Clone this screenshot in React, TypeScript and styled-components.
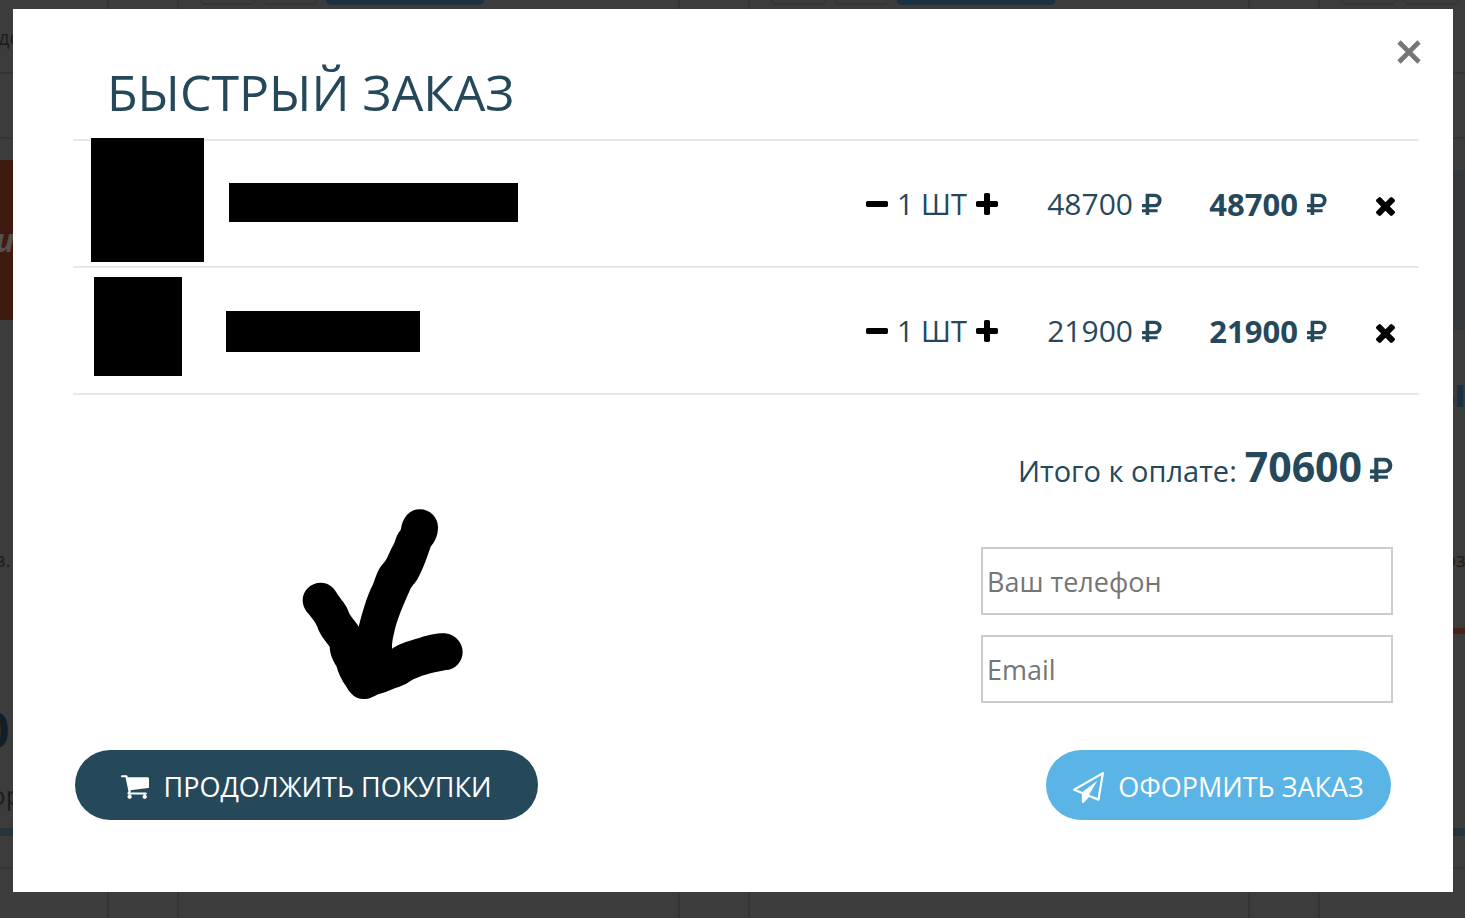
import React from 'react';
import styled, { createGlobalStyle } from 'styled-components';

const GlobalStyle = createGlobalStyle`
  * { box-sizing: border-box; }
  body { margin: 0; background: #3c3c3c; font-family: "Open Sans", "Noto Sans", sans-serif; color: #25485b; }
  button, input { font-family: inherit; }
`;

/* ---------- dimmed catalogue page behind the dialog ---------- */

const Catalogue = styled.div`
  position: fixed;
  inset: 0;
  display: grid;
  grid-template-columns: 109px 1fr 1fr 147px;
  column-gap: 68px;
  overflow: hidden;
  background: #3c3c3c;
`;

const Card = styled.div<{ $side?: 'first' | 'last' }>`
  border: solid #343434;
  border-width: ${p => (p.$side === 'first' ? '0 2px 0 0' : p.$side === 'last' ? '0 0 0 2px' : '0 2px')};
  min-width: 0;
`;

const CardControls = styled.div`
  display: flex;
  gap: 8px;
  height: 5px;
  padding-left: 21px;
`;

const GhostPill = styled.span`
  flex: none;
  width: 55px;
  border: solid #343434;
  border-width: 0 1px 2px;
  border-radius: 0 0 14px 14px;
`;

const BluePill = styled.span`
  flex: none;
  width: 158px;
  border-radius: 0 0 8px 8px;
  background: #1b3040;
`;

const Edge = styled.div<{ $indent?: number }>`
  display: flex;
  flex-direction: column;
  padding-left: ${p => p.$indent || 0}px;
  white-space: nowrap;
`;

const EdgeCell = styled.div<{ $height: number; $bg?: string; $line?: string }>`
  display: flex;
  align-items: center;
  flex: none;
  height: ${p => p.$height}px;
  background: ${p => p.$bg || 'transparent'};
  border-bottom: ${p => (p.$line ? `2px solid ${p.$line}` : 'none')};
`;

const EdgeText = styled.span<{ $size: number; $color?: string; $bold?: boolean; $italic?: boolean; $shift?: number }>`
  margin-left: ${p => p.$shift || 0}px;
  font-size: ${p => p.$size}px;
  line-height: 1;
  font-weight: ${p => (p.$bold ? 700 : 400)};
  font-style: ${p => (p.$italic ? 'italic' : 'normal')};
  color: ${p => p.$color || '#1c1c1c'};
`;

/* ---------- dialog ---------- */

const Overlay = styled.div`
  position: relative;
  padding: 9px 12px 26px 13px;
`;

const Dialog = styled.section`
  position: relative;
  padding: 53px 34px 72px 60px;
  background: #fff;
`;

const Title = styled.h1`
  margin: 0 0 17px 34px;
  font-size: 50px;
  line-height: 60px;
  font-weight: 400;
`;

const IconButton = styled.button`
  display: inline-flex;
  padding: 0;
  border: 0;
  background: none;
  color: #000;
  cursor: pointer;
`;

const CloseButton = styled(IconButton)`
  position: absolute;
  top: 31px;
  right: 32px;
  color: #757575;
`;

const RemoveButton = styled(IconButton)`
  padding-top: 5px;
`;

const Items = styled.table`
  width: 100%;
  border-spacing: 0;
  border-top: 2px solid #e8e8e8;
  table-layout: fixed;
`;

const Cell = styled.td<{ $width?: number; $bold?: boolean; $end?: number }>`
  width: ${p => (p.$width ? `${p.$width}px` : 'auto')};
  height: 127px;
  padding: 0 ${p => p.$end || 0}px 0 0;
  border-bottom: 2px solid #e8e8e8;
  text-align: right;
  font-size: ${p => (p.$bold ? 31 : 30)}px;
  line-height: 40px;
  font-weight: ${p => (p.$bold ? 700 : 400)};
  white-space: nowrap;
`;

const Product = styled.div`
  display: flex;
  align-items: flex-start;
  height: 125px;
`;

const Block = styled.div<{ $w: number; $h: number; $top: number; $left: number }>`
  flex: none;
  width: ${p => p.$w}px;
  height: ${p => p.$h}px;
  margin: ${p => p.$top}px 0 0 ${p => p.$left}px;
  background: #000;
`;

const Inline = styled.div`
  display: flex;
  align-items: center;
  justify-content: flex-end;
  gap: 9px;
`;

const Qty = styled.span`
  font-size: 29px;
`;

const Checkout = styled.div`
  display: flex;
  justify-content: space-between;
  align-items: flex-start;
  padding-right: 26px;
`;

const Arrow = styled.svg`
  margin: 114px 0 0 229px;
`;

const Form = styled.form`
  display: flex;
  flex-direction: column;
  gap: 20px;
  width: 412px;
`;

const Total = styled.p`
  display: flex;
  align-items: baseline;
  justify-content: flex-end;
  gap: 8px;
  margin: 47px 0 32px;
  font-size: 29px;
  line-height: 48px;
  white-space: nowrap;
`;

const Amount = styled.strong`
  font-size: 41px;
`;

const Field = styled.input`
  width: 100%;
  height: 68px;
  padding: 0 4px;
  border: 2px solid #ccc;
  border-radius: 0;
  background: #fff;
  color: #25485b;
  font-size: 27px;
  &::placeholder { color: #757575; opacity: 1; }
`;

const Actions = styled.div`
  display: flex;
  justify-content: space-between;
  margin-top: 47px;
  padding: 0 28px 0 2px;
`;

const Pill = styled.button<{ $bg: string; $width: number }>`
  display: flex;
  align-items: center;
  justify-content: center;
  gap: 14px;
  width: ${p => p.$width}px;
  height: 70px;
  padding: 4px 0 0;
  border: 0;
  border-radius: 35px;
  background: ${p => p.$bg};
  color: #fff;
  font-size: 27px;
  line-height: 36px;
  white-space: nowrap;
  cursor: pointer;
`;

/* ---------- icons ---------- */

const MINUS = 'M1600 736v192q0 40-28 68t-68 28h-1216q-40 0-68-28t-28-68v-192q0-40 28-68t68-28h1216q40 0 68 28t28 68z';
const PLUS = 'M1600 736v192q0 40-28 68t-68 28h-416v416q0 40-28 68t-68 28h-192q-40 0-68-28t-28-68v-416h-416q-40 0-68-28t-28-68v-192q0-40 28-68t68-28h416v-416q0-40 28-68t68-28h192q40 0 68 28t28 68v416h416q40 0 68 28t28 68z';
const TIMES = 'M1490 1322q0 40-28 68l-136 136q-28 28-68 28t-68-28l-294-294-294 294q-28 28-68 28t-68-28l-136-136q-28-28-28-68t28-68l294-294-294-294q-28-28-28-68t28-68l136-136q28-28 68-28t68 28l294 294 294-294q28-28 68-28t68 28l136 136q28 28 28 68t-28 68l-294 294 294 294q28 28 28 68z';
const RUBLE = 'M1245 608q0-100-65-162t-171-62h-320v448h320q106 0 171-62t65-162zm230 0q0 193-126.500 315t-326.500 122h-333v118h505q14 0 23 9t9 23v128q0 14-9 23t-23 9h-505v192q0 14-9.500 23t-22.500 9h-167q-14 0-23-9t-9-23v-192h-224q-14 0-23-9t-9-23v-128q0-14 9-23t23-9h224v-118h-224q-14 0-23-9t-9-23v-149q0-13 9-22.500t23-9.500h224v-629q0-14 9-23t23-9h539q200 0 326.500 122t126.500 315z';
const CART = 'M704 1536q0 52-38 90t-90 38-90-38-38-90 38-90 90-38 90 38 38 90zm896 0q0 52-38 90t-90 38-90-38-38-90 38-90 90-38 90 38 38 90zm128-1088v512q0 24-16.500 42.500t-40.500 21.500l-1044 122q13 60 13 70 0 16-24 64h920q26 0 45 19t19 45-19 45-45 19h-1024q-26 0-45-19t-19-45q0-11 8-31.500t16-36 21.500-40 15.500-29.500l-177-823h-204q-26 0-45-19t-19-45 19-45 45-19h256q16 0 28.500 6.500t19.500 15.500 13 24.500 8 26 5.500 29.500 4.500 26h1201q26 0 45 19t19 45z';
const PLANE = 'M1764 11q33 24 27 64l-256 1536q-5 29-32 45-14 8-31 8-11 0-24-5l-527-215-298 327q-18 21-47 21-14 0-23-4-19-7-30-23.500t-11-36.500v-452l-472-193q-37-14-40-55-3-39 32-59l1664-960q35-21 68 2zm-342 1499l221-1323-1434 827 336 137 863-639-478 797z';

const Icon = ({ d, box, w, h }: { d: string; box: string; w: number; h: number }) => (
  <svg viewBox={box} width={w} height={h} fill="currentColor" aria-hidden="true">
    <path d={d} />
  </svg>
);

const Ruble = ({ w, h }: { w: number; h: number }) => <Icon d={RUBLE} box="256 128 1219 1408" w={w} h={h} />;

type Item = {
  price: string;
  thumb: [number, number, number, number];
  name: [number, number, number, number];
};

const items: Item[] = [
  { price: '48700', thumb: [113, 124, -3, 18], name: [289, 39, 42, 25] },
  { price: '21900', thumb: [88, 99, 9, 21], name: [194, 41, 43, 44] },
];

const Controls = () => (
  <CardControls>
    <GhostPill />
    <GhostPill />
    <BluePill />
  </CardControls>
);

export default function App() {
  return (
    <>
      <GlobalStyle />
      <Catalogue aria-hidden="true">
        <Card $side="first">
          <Edge>
            <EdgeCell $height={4} />
            <EdgeCell $height={70} $line="#343434"><EdgeText $size={20} $shift={-2}>дс</EdgeText></EdgeCell>
            <EdgeCell $height={65} $line="#343434" />
            <EdgeCell $height={21} />
            <EdgeCell $height={160} $bg="#3f1a0e">
              <EdgeText $size={32} $shift={-5} $color="#55504e" $bold $italic>и</EdgeText>
            </EdgeCell>
            <EdgeCell $height={220} />
            <EdgeCell $height={40}><EdgeText $size={20} $shift={-6}>в.</EdgeText></EdgeCell>
            <EdgeCell $height={110} />
            <EdgeCell $height={80}><EdgeText $size={48} $shift={-18} $color="#131f28" $bold>0</EdgeText></EdgeCell>
            <EdgeCell $height={50}><EdgeText $size={26} $shift={-10}>ор</EdgeText></EdgeCell>
            <EdgeCell $height={8} />
            <EdgeCell $height={8} $bg="#26343e" />
            <EdgeCell $height={33} $line="#343434" />
          </Edge>
        </Card>
        <Card><Controls /></Card>
        <Card><Controls /></Card>
        <Card $side="last">
          <Controls />
          <Edge $indent={133}>
            <EdgeCell $height={69} $line="#343434" />
            <EdgeCell $height={65} $line="#343434" />
            <EdgeCell $height={31} />
            <EdgeCell $height={160} $bg="#35383b" />
            <EdgeCell $height={42} />
            <EdgeCell $height={40}><EdgeText $size={40} $shift={-21} $color="#1b3145" $bold>ы</EdgeText></EdgeCell>
            <EdgeCell $height={128} />
            <EdgeCell $height={40}><EdgeText $size={20} $shift={-9}>оз</EdgeText></EdgeCell>
            <EdgeCell $height={48} />
            <EdgeCell $height={6} $bg="#44231a" />
            <EdgeCell $height={194} />
            <EdgeCell $height={8} $bg="#22343c" />
            <EdgeCell $height={33} $line="#343434" />
          </Edge>
        </Card>
      </Catalogue>

      <Overlay>
        <Dialog role="dialog" aria-labelledby="order-title">
          <CloseButton type="button" aria-label="Закрыть">
            <svg width="24" height="24" viewBox="0 0 24 24" fill="none" stroke="currentColor" strokeWidth="4.6">
              <path d="M2 2l20 20M22 2L2 22" />
            </svg>
          </CloseButton>
          <Title id="order-title">БЫСТРЫЙ ЗАКАЗ</Title>

          <Items>
            <tbody>
              {items.map(({ price, thumb, name }) => (
                <tr key={price}>
                  <Cell>
                    <Product>
                      <Block $w={thumb[0]} $h={thumb[1]} $top={thumb[2]} $left={thumb[3]} />
                      <Block $w={name[0]} $h={name[1]} $top={name[2]} $left={name[3]} />
                    </Product>
                  </Cell>
                  <Cell $width={160}>
                    <Inline>
                      <IconButton type="button" aria-label="Меньше"><Icon d={MINUS} box="192 128 1408 1408" w={22} h={22} /></IconButton>
                      <Qty>1 ШТ</Qty>
                      <IconButton type="button" aria-label="Больше"><Icon d={PLUS} box="192 128 1408 1408" w={22} h={22} /></IconButton>
                    </Inline>
                  </Cell>
                  <Cell $width={164}><Inline>{price}<Ruble w={20} h={22} /></Inline></Cell>
                  <Cell $width={165} $bold><Inline>{price}<Ruble w={20} h={22} /></Inline></Cell>
                  <Cell $width={92} $end={24}>
                    <Inline>
                      <RemoveButton type="button" aria-label="Удалить"><Icon d={TIMES} box="302 366 1188 1188" w={19} h={19} /></RemoveButton>
                    </Inline>
                  </Cell>
                </tr>
              ))}
            </tbody>
          </Items>

          <Checkout>
            <Arrow width="162" height="192" viewBox="66 57 486 576" aria-hidden="true">
              <path d="M420 58C450 58 474 82 474 112C474 140 462 158 452 170C440 205 430 235 412 268C404 282 396 286 390 300C370 345 350 390 342 430C337 450 336 462 336 476C350 466 375 455 420 443C440 436 470 430 490 430C522 430 548 456 548 486C548 516 524 540 498 540C470 545 435 552 400 568C385 578 372 586 358 590C340 594 320 606 300 611C285 614 275 627 250 627C225 627 212 612 200 592C185 570 175 550 170 530C155 505 150 490 149 470C130 445 118 430 112 410C100 385 88 375 80 365C70 350 68 340 68 330C68 302 92 278 122 278C145 278 162 292 172 312C182 328 200 345 206 366C214 385 226 392 236 410C246 370 260 320 278 285C288 262 292 240 306 225C325 205 325 190 340 165C350 145 346 140 362 120C368 80 390 58 420 58Z" />
            </Arrow>
            <Form id="order-form" onSubmit={e => e.preventDefault()}>
              <Total>
                <span>Итого к оплате:</span>
                <Amount>70600</Amount>
                <Ruble w={23} h={25} />
              </Total>
              <Field type="tel" placeholder="Ваш телефон" aria-label="Ваш телефон" />
              <Field type="email" placeholder="Email" aria-label="Email" />
            </Form>
          </Checkout>

          <Actions>
            <Pill type="button" $bg="#25485b" $width={463}>
              <Icon d={CART} box="64 256 1664 1408" w={28} h={24} />
              ПРОДОЛЖИТЬ ПОКУПКИ
            </Pill>
            <Pill type="submit" form="order-form" $bg="#5ab4e5" $width={345}>
              <Icon d={PLANE} box="0 0 1792 1792" w={31} h={31} />
              ОФОРМИТЬ ЗАКАЗ
            </Pill>
          </Actions>
        </Dialog>
      </Overlay>
    </>
  );
}
